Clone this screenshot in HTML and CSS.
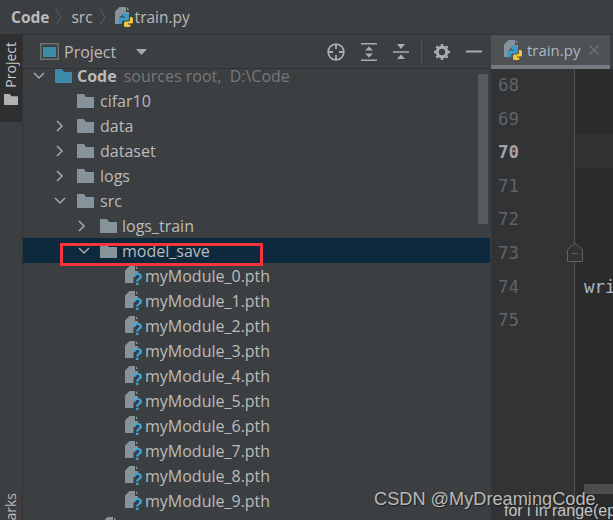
FILE: index.html
```html
<!DOCTYPE html>
<html lang="en">
<head>
<meta charset="utf-8">
<title>train.py - Code</title>
<link rel="stylesheet" href="styles.css">
</head>
<body>
<svg class="defs" width="0" height="0" aria-hidden="true">
  <symbol id="folder" viewBox="0 0 17 14"><path d="M0 0h7l2 3h8v11H0z"/></symbol>
  <symbol id="unknown" viewBox="0 0 17 19">
    <path fill="#87939a" d="M4.500 0H10v5h3v2.500a5 5 0 0 0-4.500 5V17H0V4.500z"/>
    <path fill="#87939a" d="M11 0l2 3h-2z"/>
    <text x="7.500" y="18.800" font-family="Liberation Sans, sans-serif" font-weight="700" font-size="17" fill="#3aa7dd">?</text>
  </symbol>
  <symbol id="py" viewBox="0 0 18 20">
    <path fill="#87939a" d="M4.500 0H11v5h3v2H8L4 11v6H0V4.500z"/>
    <path fill="#87939a" d="M12 0l2 3h-2z"/>
    <path fill="#3d9bc9" d="M9 6h3.500a1.500 1.500 0 0 1 1.500 1.500V12a1.500 1.500 0 0 1-1.500 1.500H9a2 2 0 0 0-2 2V17H5a1.500 1.500 0 0 1-1.500-1.500V12A1.500 1.500 0 0 1 5 10.500h5V9.500H7.500V7.500A1.500 1.500 0 0 1 9 6z"/>
    <path fill="#f3c73b" d="M15 10h1.500A1.500 1.500 0 0 1 18 11.500V15a1.500 1.500 0 0 1-1.500 1.500H13v1h2.500v1A1.500 1.500 0 0 1 14 20h-3.500A1.500 1.500 0 0 1 9 18.500V16a1.500 1.500 0 0 1 1.500-1.500H13a2 2 0 0 0 2-2z"/>
  </symbol>
  <symbol id="chev-d" viewBox="0 0 12 8"><path d="M1 1l5 5 5-5" fill="none" stroke="#a6a8aa" stroke-width="1.500"/></symbol>
  <symbol id="chev-r" viewBox="0 0 8 12"><path d="M1 1l5 5-5 5" fill="none" stroke="#a6a8aa" stroke-width="1.500"/></symbol>
</svg>

<nav class="crumbs">
  <span class="crumb-root">Code</span>
  <svg class="crumb-sep" width="8" height="18" viewBox="0 0 8 18"><path d="M1 1l5 8-5 8" fill="none" stroke="#5c6062"/></svg>
  <span class="crumb-text">src</span>
  <svg class="crumb-sep" width="8" height="18" viewBox="0 0 8 18"><path d="M1 1l5 8-5 8" fill="none" stroke="#5c6062"/></svg>
  <svg class="py-icon" width="18" height="20"><use href="#py"/></svg>
  <span class="crumb-text">train.py</span>
</nav>

<main class="workspace">
  <aside class="strip">
    <div class="strip-tab">
      <span class="strip-label">Project</span>
      <svg class="strip-folder" width="14" height="11" viewBox="0 0 17 14" preserveAspectRatio="none"><use href="#folder"/></svg>
    </div>
    <span class="strip-label strip-bottom">Bookmarks</span>
  </aside>

  <section class="panel">
    <header class="panel-head">
      <svg class="project-icon" width="19" height="17" viewBox="0 0 19 17"><rect x=".75" y=".75" width="17.500" height="15.500" fill="none" stroke="#6e7275" stroke-width="1.500"/><rect x="3" y="4" width="13" height="10" fill="#3d8ba8"/></svg>
      <span class="panel-title">Project</span>
      <svg class="dropdown" width="11" height="6" viewBox="0 0 11 6"><path d="M0 0h11L5.500 6z" fill="#a6a8aa"/></svg>
      <div class="panel-tools">
        <svg class="tool" width="18" height="18" viewBox="0 0 18 18"><g fill="none" stroke="#a9abad" stroke-width="1.800"><circle cx="9" cy="9" r="7.800"/><path d="M9 1v5M9 12v5M1 9h5M12 9h5"/></g></svg>
        <svg class="tool" width="16" height="18" viewBox="0 0 16 18"><path d="M0 .75h16M0 17.250h16" stroke="#a9abad" stroke-width="1.500"/><path d="M8 3.500l4 4H4zM8 14.500l4-4H4z" fill="#a9abad"/></svg>
        <svg class="tool" width="16" height="16" viewBox="0 0 16 16"><path d="M0 8h16" stroke="#a9abad" stroke-width="1.500"/><path d="M4 0h8L8 5zM8 10.500l4 4.500H4z" fill="#a9abad"/></svg>
        <span class="tool-sep"></span>
        <svg class="tool" width="16" height="16" viewBox="0 0 16 16"><circle cx="8" cy="8" r="4.800" fill="none" stroke="#a9abad" stroke-width="3.200"/><path d="M8 0v3M8 13v3M0 8h3M13 8h3M2.300 2.300l2.200 2.200M11.500 11.500l2.200 2.200M2.300 13.700l2.200-2.200M11.500 4.500l2.200-2.200" stroke="#a9abad" stroke-width="2.400"/></svg>
        <svg class="tool" width="16" height="3" viewBox="0 0 16 3"><path d="M0 1.500h16" stroke="#a9abad" stroke-width="2"/></svg>
      </div>
    </header>

    <div class="tree">
      <div class="row l0"><svg class="chev" width="12" height="8"><use href="#chev-d"/></svg><svg class="fold root" width="17" height="14"><use href="#folder"/></svg><strong class="root-name">Code</strong><span class="hint">sources root,&nbsp; D:\Code</span></div>
      <div class="row l1"><span class="chev-slot"></span><svg class="fold" width="17" height="14"><use href="#folder"/></svg><span>cifar10</span></div>
      <div class="row l1"><svg class="chev" width="8" height="12"><use href="#chev-r"/></svg><svg class="fold" width="17" height="14"><use href="#folder"/></svg><span>data</span></div>
      <div class="row l1"><svg class="chev" width="8" height="12"><use href="#chev-r"/></svg><svg class="fold" width="17" height="14"><use href="#folder"/></svg><span>dataset</span></div>
      <div class="row l1"><svg class="chev" width="8" height="12"><use href="#chev-r"/></svg><svg class="fold" width="17" height="14"><use href="#folder"/></svg><span>logs</span></div>
      <div class="row l1"><svg class="chev" width="12" height="8"><use href="#chev-d"/></svg><svg class="fold" width="17" height="14"><use href="#folder"/></svg><span>src</span></div>
      <div class="row l2"><svg class="chev" width="8" height="12"><use href="#chev-r"/></svg><svg class="fold" width="17" height="14"><use href="#folder"/></svg><span>logs_train</span></div>
      <div class="row l2 selected"><svg class="chev" width="12" height="8"><use href="#chev-d"/></svg><svg class="fold" width="17" height="14"><use href="#folder"/></svg><span>model_save</span><span class="red-box"></span></div>
      <div class="row l3"><svg class="file" width="17" height="19"><use href="#unknown"/></svg><span>myModule_0.pth</span></div>
      <div class="row l3"><svg class="file" width="17" height="19"><use href="#unknown"/></svg><span>myModule_1.pth</span></div>
      <div class="row l3"><svg class="file" width="17" height="19"><use href="#unknown"/></svg><span>myModule_2.pth</span></div>
      <div class="row l3"><svg class="file" width="17" height="19"><use href="#unknown"/></svg><span>myModule_3.pth</span></div>
      <div class="row l3"><svg class="file" width="17" height="19"><use href="#unknown"/></svg><span>myModule_4.pth</span></div>
      <div class="row l3"><svg class="file" width="17" height="19"><use href="#unknown"/></svg><span>myModule_5.pth</span></div>
      <div class="row l3"><svg class="file" width="17" height="19"><use href="#unknown"/></svg><span>myModule_6.pth</span></div>
      <div class="row l3"><svg class="file" width="17" height="19"><use href="#unknown"/></svg><span>myModule_7.pth</span></div>
      <div class="row l3"><svg class="file" width="17" height="19"><use href="#unknown"/></svg><span>myModule_8.pth</span></div>
      <div class="row l3"><svg class="file" width="17" height="19"><use href="#unknown"/></svg><span>myModule_9.pth</span></div>
      <div class="row l2b"><svg class="file" width="17" height="19"><use href="#unknown"/></svg></div>
    </div>
    <div class="tree-scroll"></div>
  </section>

  <section class="editor">
    <div class="tabs">
      <div class="tab">
        <svg class="py-icon" width="18" height="20"><use href="#py"/></svg>
        <span>train.py</span>
        <svg class="close" width="10" height="10" viewBox="0 0 10 10"><path d="M.5.500l9 9M9.500.500l-9 9" stroke="#6f7376" stroke-width="1.200"/></svg>
      </div>
    </div>
    <div class="code-area">
      <div class="gutter">
        <span>68</span><span>69</span><span class="now">70</span><span>71</span><span>72</span><span>73</span><span>74</span><span>75</span>
      </div>
      <div class="code">
        <div class="line"></div>
        <div class="line"></div>
        <div class="line current"></div>
        <div class="line"></div>
        <div class="line"></div>
        <div class="line"></div>
        <div class="line">wri</div>
        <div class="line"></div>
      </div>
      <svg class="fold-mark" width="16" height="19" viewBox="0 0 16 19"><path d="M.5 18.500V6.500L8 .500l7.500 6v12z" fill="#313335" stroke="#606366"/><path d="M5 10.500h6" stroke="#606366"/></svg>
      <div class="h-scroll"></div>
      <div class="peek">for i in range(ep</div>
    </div>
  </section>
</main>
<div class="watermark">CSDN @MyDreamingCode</div>
</body>
</html>
```
FILE: styles.css
```css
* { box-sizing: border-box; }
html, body { height: 100%; }
body {
  margin: 0;
  width: 613px;
  height: 520px;
  overflow: hidden;
  position: relative;
  display: flex;
  flex-direction: column;
  background: #3c3f41;
  color: #bbbbbb;
  font-family: "Open Sans", "Noto Sans", sans-serif;
  font-size: 16px;
}
.defs { position: absolute; }
.crumbs {
  height: 35px;
  flex: none;
  display: flex;
  align-items: center;
  padding-left: 11px;
  border-bottom: 1px solid #323232;
  font-size: 15.500px;
}
.crumb-root { font-weight: 700; color: #bbbbbb; }
.crumb-sep { margin: 0 8px 0 6px; }
.crumb-text { color: #bbbbbb; }
.crumb-sep + .py-icon { margin-right: 2px; }
.workspace { flex: 1; display: flex; min-height: 0; }

.strip {
  width: 23px;
  flex: none;
  border-right: 1px solid #323232;
  display: flex;
  flex-direction: column;
  justify-content: space-between;
  overflow: hidden;
}
.strip-tab {
  height: 87px;
  background: #2d2f30;
  display: flex;
  flex-direction: column;
  align-items: center;
  padding-top: 7px;
  gap: 6px;
}
.strip-label {
  writing-mode: vertical-rl;
  transform: rotate(180deg);
  font-size: 14px;
  line-height: 22px;
  color: #c8c8c8;
  flex: none;
}
.strip-folder { fill: #afb1b3; flex: none; }
.strip-bottom { margin-bottom: -47px; color: #bbbbbb; }

.panel {
  width: 468px;
  flex: none;
  position: relative;
  display: flex;
  flex-direction: column;
  overflow: hidden;
}
.panel-head {
  height: 34px;
  flex: none;
  display: flex;
  align-items: center;
  padding-left: 17px;
  border-bottom: 1px solid #323232;
  position: relative;
}
.panel-title { margin-left: 5px; color: #bbbbbb; }
.dropdown { margin-left: 20px; }
.panel-tools {
  margin-left: auto;
  margin-right: 9px;
  display: flex;
  align-items: center;
  gap: 16px;
}
.tool { display: block; flex: none; }
.tool-sep { width: 1px; height: 24px; background: #515456; margin: 0 -4px; }

.tree { flex: 1; overflow: hidden; margin-top: -6px; }
.row {
  height: 25px;
  display: flex;
  align-items: center;
  position: relative;
  white-space: nowrap;
  margin-right: 1px;
}
.chev { flex: none; }
.chev-slot { width: 8px; flex: none; }
.fold { fill: #87939a; flex: none; }
.fold.root { fill: #3d8ba8; }
.l0 { padding-left: 10px; }
.l0 .chev { margin-right: 10px; }
.l0 .fold { margin-right: 5px; }
.l1 { padding-left: 33px; }
.l1 .chev, .l1 .chev-slot { margin-right: 13px; }
.l1 .chev[height="8"] { margin-left: -2px; margin-right: 11px; }
.l1 .fold { margin-right: 6px; }
.l2 { padding-left: 55px; }
.l2 .chev { margin-right: 14px; }
.l2 .chev[height="8"] { margin-right: 10px; }
.l2 .fold { margin-right: 5px; }
.l3 { padding-left: 102px; }
.l3 .file { margin-right: 3px; flex: none; }
.l2b { padding-left: 80px; align-items: flex-start; padding-top: 4px; }
.root-name { font-weight: 700; margin-right: 7px; }
.hint { color: #787878; }
.selected { background: #0d293e; }
.red-box {
  position: absolute;
  left: 37px;
  top: 5px;
  width: 203px;
  height: 23px;
  border: 3px solid #f4343a;
}

.tree-scroll {
  position: absolute;
  left: 455px;
  top: 39px;
  width: 10px;
  height: 150px;
  background: #57595b;
}

.editor { flex: 1; min-width: 0; display: flex; flex-direction: column; background: #2b2b2b; }
.tabs { height: 34px; flex: none; background: #3c3f41; }
.tab {
  width: 119px;
  height: 34px;
  display: flex;
  align-items: center;
  padding-left: 13px;
  background: #4e5254;
  border-bottom: 4px solid #747a80;
  color: #a9b7c6;
  font-size: 15px;
}
.tab .py-icon { margin-right: 5px; flex: none; }
.close { margin-left: 9px; flex: none; }

.code-area { flex: 1; position: relative; display: flex; min-height: 0; overflow: hidden; }
.gutter {
  width: 84px;
  flex: none;
  background: #313335;
  border-right: 1px solid #555555;
  display: flex;
  flex-direction: column;
  padding: 0 0 0 7px;
  font-family: "DejaVu Sans Mono", monospace;
  font-size: 17.500px;
  color: #606366;
}
.gutter span { height: 33.600px; line-height: 33.600px; flex: none; }
.gutter .now { color: #a4a3a3; font-weight: 700; }
.code { flex: 1; min-width: 0; margin-top: -2px; font-family: "DejaVu Sans Mono", monospace; font-size: 17.500px; color: #a9b7c6; }
.line { height: 33.600px; line-height: 33.600px; padding-left: 9px; overflow: hidden; }
.line:nth-child(7) { padding-top: 2px; }
.current { background: #323232; }
.fold-mark { position: absolute; left: 76px; top: 174px; }
.h-scroll {
  position: absolute;
  left: 93px;
  top: 415px;
  width: 40px;
  height: 10px;
  background: #4b4d4e;
}
.peek {
  position: absolute;
  left: 13px;
  top: 433px;
  font-family: "Liberation Sans", sans-serif;
  font-size: 16px;
  line-height: 18px;
  color: #c4c4c4;
  white-space: nowrap;
}
.watermark {
  position: absolute;
  left: 374px;
  top: 488px;
  font-family: "Liberation Sans", sans-serif;
  font-size: 18.200px;
  line-height: 22px;
  color: #b9b9b9;
  text-shadow: 1px 1px 1px #1d1d1d;
  white-space: nowrap;
}
```
